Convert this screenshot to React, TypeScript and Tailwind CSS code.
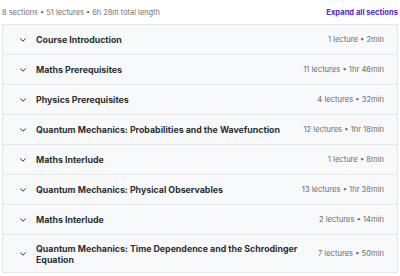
import React from "react";

const sections: { title: string; meta: string }[] = [
  { title: "Course Introduction", meta: "1 lecture • 2min" },
  { title: "Maths Prerequisites", meta: "11 lectures • 1hr 46min" },
  { title: "Physics Prerequisites", meta: "4 lectures • 32min" },
  { title: "Quantum Mechanics: Probabilities and the Wavefunction", meta: "12 lectures • 1hr 18min" },
  { title: "Maths Interlude", meta: "1 lecture • 8min" },
  { title: "Quantum Mechanics: Physical Observables", meta: "13 lectures • 1hr 38min" },
  { title: "Maths Interlude", meta: "2 lectures • 14min" },
  { title: "Quantum Mechanics: Time Dependence and the Schrodinger Equation", meta: "7 lectures • 50min" },
];

function Chevron() {
  return (
    <svg width="8" height="8" viewBox="0 0 8 8" className="shrink-0">
      <path d="M1.6 2.9 L4 5.2 L6.4 2.9" fill="none" stroke="#2d2f31" strokeWidth="1" strokeLinecap="round" strokeLinejoin="round" />
    </svg>
  );
}

export default function App() {
  return (
    <div className="w-[400px] h-[276px] bg-white overflow-hidden" style={{ fontFamily: "Inter, 'Noto Sans', sans-serif" }}>
      <div className="flex items-center justify-between pl-[2px] pr-[2px] h-[24px] pt-[2px]">
        <span className="text-[7.4px] text-[#6a6f73]">8 sections • 51 lectures • 6h 28m total length</span>
        <span className="text-[7.6px] font-bold text-[#5624d0]">Expand all sections</span>
      </div>
      <div className="mx-[2px] border border-[#e4e6e8] border-b-0">
        {sections.map((s, i) => (
          <div key={i} className="flex items-center min-h-[30px] py-[7.5px] pl-[16px] pr-[13px] bg-[#f7f9fa] border-b border-[#e4e6e8]">
            <Chevron />
            <div className="ml-[9px] flex-1 text-[8.8px] leading-[11px] font-bold text-[#2d2f31] pr-[12px]">{s.title}</div>
            <div className="text-[7.6px] text-[#6a6f73] whitespace-nowrap">{s.meta}</div>
          </div>
        ))}
      </div>
    </div>
  );
}
